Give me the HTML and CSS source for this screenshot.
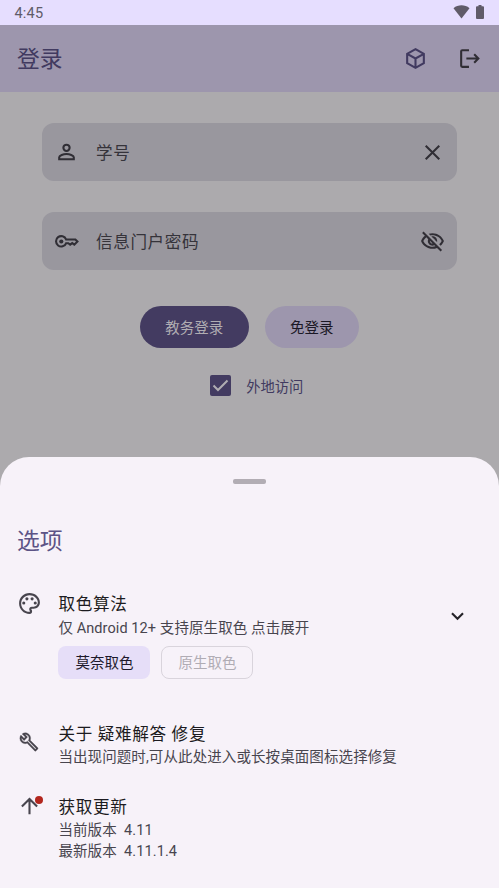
FILE: index.html
```html
<!DOCTYPE html>
<html lang="zh-CN">
<head>
<meta charset="utf-8">
<title>登录</title>
<link rel="stylesheet" href="styles.css">
</head>
<body>
<div class="screen">
  <div class="status-bar">
    <span class="clock">4:45</span>
    <svg class="wifi" viewBox="0 0 17 14"><path d="M.5 3.200C5-.6 12-.6 16.500 3.200L8.500 13.500z"/></svg>
    <svg class="battery" viewBox="0 0 8 14"><path d="M2.500 0h3v1.300H7q1 0 1 1V13q0 1-1 1H1q-1 0-1-1V2.300q0-1 1-1h1.500z"/></svg>
  </div>
  <header class="app-bar">
    <h1>登录</h1>
    <svg class="icon line cube" viewBox="0 0 24 24"><path d="M12 3l8 4.500v9L12 21l-8-4.500v-9zM4 7.500l8 4.500 8-4.500M12 12v9"/></svg>
    <svg class="icon line" viewBox="0 0 24 24"><path d="M11.500 4H5q-1 0-1 1v14q0 1 1 1h6.500M9 12h11M16.500 8l4 4-4 4"/></svg>
  </header>
  <main class="login">
    <div class="field">
      <svg class="icon line" viewBox="0 0 24 24"><circle cx="12" cy="7.500" r="3"/><path d="M5 18.500v-2c0-1.800 4-3 7-3s7 1.200 7 3v2z"/></svg>
      <span class="label">学号</span>
      <svg class="icon line" viewBox="0 0 24 24"><path d="M5.500 5.500l13 13M18.500 5.500l-13 13"/></svg>
    </div>
    <div class="field">
      <svg class="icon line" viewBox="0 0 24 24"><path d="M11.600 10H20.500l2 2-3 3-2-1.500-2 1.500-1.800-1.300h-2.100A5 5 0 1 1 11.600 10z"/><circle class="dot" cx="7" cy="12" r="2"/></svg>
      <span class="label">信息门户密码</span>
      <svg class="icon" viewBox="0 0 24 24"><path d="M12 6c3.790 0 7.170 2.130 8.820 5.500-.59 1.220-1.420 2.270-2.410 3.120l1.410 1.410c1.390-1.230 2.490-2.770 3.180-4.530C21.270 7.110 17 4 12 4c-1.270 0-2.490.2-3.640.57l1.650 1.650C10.660 6.090 11.320 6 12 6zm-1.070 1.140L13 9.210c.57.25 1.030.71 1.280 1.280l2.070 2.070c.08-.34.14-.7.14-1.070C16.500 9.010 14.480 7 12 7c-.37 0-.72.05-1.070.14zM2.010 3.870l2.680 2.680C3.060 7.830 1.770 9.530 1 11.500 2.730 15.890 7 19 12 19c1.520 0 2.980-.29 4.320-.82l3.420 3.420 1.410-1.410L3.420 2.450 2.010 3.870zm7.500 7.500l2.610 2.610c-.04.01-.08.02-.12.02-1.380 0-2.500-1.120-2.500-2.500 0-.05.01-.08.01-.13zm-3.400-3.400l1.750 1.750c-.23.55-.36 1.150-.36 1.780 0 2.480 2.020 4.500 4.500 4.500.63 0 1.230-.13 1.770-.36l.98.98c-.88.24-1.800.38-2.750.38-3.790 0-7.170-2.130-8.820-5.500.7-1.430 1.720-2.610 2.930-3.530z"/></svg>
    </div>
    <div class="buttons">
      <button class="btn primary">教务登录</button>
      <button class="btn tonal">免登录</button>
    </div>
    <div class="check">
      <svg class="box" viewBox="0 0 21 21"><rect width="21" height="21" rx="2"/><path d="M3.500 10.500l4.500 4.500 9.500-9.500"/></svg>
      <span>外地访问</span>
    </div>
  </main>
  <section class="sheet">
    <div class="handle"></div>
    <h2>选项</h2>
    <div class="row palette">
      <svg class="icon" viewBox="0 0 24 24"><path d="M12 22C6.490 22 2 17.510 2 12S6.490 2 12 2s10 4.040 10 9c0 3.310-2.690 6-6 6h-1.770c-.28 0-.5.22-.5.5 0 .12.05.23.13.33.41.47.64 1.060.64 1.670A2.500 2.500 0 0 1 12 22zm0-18c-4.410 0-8 3.590-8 8s3.590 8 8 8c.28 0 .5-.22.5-.5a.54.54 0 0 0-.14-.35c-.41-.46-.63-1.050-.63-1.650a2.500 2.500 0 0 1 2.500-2.500H16c2.210 0 4-1.790 4-4 0-3.860-3.590-7-8-7z"/><circle cx="6.500" cy="11.500" r="1.500"/><circle cx="9.500" cy="7.500" r="1.500"/><circle cx="14.500" cy="7.500" r="1.500"/><circle cx="17.500" cy="11.500" r="1.500"/></svg>
      <div class="text">
        <h3>取色算法</h3>
        <p>仅 Android 12+ 支持原生取色 点击展开</p>
        <div class="chips"><span class="chip selected">莫奈取色</span><span class="chip disabled">原生取色</span></div>
      </div>
      <svg class="icon line chevron" viewBox="0 0 24 24"><path d="M6.700 9.800l5.300 5.300 5.300-5.300"/></svg>
    </div>
    <div class="row repair">
      <svg class="icon wrench" viewBox="0 0 24 24"><path d="M22.610 18.990l-9.080-9.080c.93-2.340.45-5.100-1.440-7C9.790.61 6.210.4 3.660 2.260L7.500 6.110 6.080 7.520 2.250 3.690C.39 6.230.6 9.820 2.900 12.110c1.860 1.860 4.570 2.350 6.890 1.480l9.110 9.110c.39.39 1.020.39 1.410 0l2.300-2.300c.4-.38.4-1.010 0-1.410zm-3 1.600l-9.460-9.460c-.61.45-1.290.72-2 .82-1.360.2-2.790-.21-3.830-1.250C3.370 9.760 2.930 8.500 3 7.260l3.090 3.090 4.240-4.240-3.090-3.090c1.240-.07 2.490.37 3.440 1.310 1.080 1.080 1.490 2.570 1.240 3.960-.12.71-.42 1.370-.88 1.960l9.450 9.450-.88.89z"/></svg>
      <div class="text">
        <h3>关于 疑难解答 修复</h3>
        <p>当出现问题时,可从此处进入或长按桌面图标选择修复</p>
      </div>
    </div>
    <div class="row update">
      <div class="badged">
        <svg class="icon line" viewBox="0 0 24 24"><path d="M12 19.500V5M4.700 12L12 4.700 19.300 12"/></svg>
        <i class="badge"></i>
      </div>
      <div class="text">
        <h3>获取更新</h3>
        <p>当前版本&nbsp; 4.11</p>
        <p>最新版本&nbsp; 4.11.1.4</p>
      </div>
    </div>
  </section>
</div>
</body>
</html>
```
FILE: styles.css
```css
* { box-sizing: border-box; }
body, h1, h2, h3, p { margin: 0; font-weight: 400; }
body { font-family: Roboto, "Noto Sans CJK SC", sans-serif; background: #acaaad; }
.screen { height: 888px; display: flex; flex-direction: column; overflow: hidden; }
svg { display: block; flex: none; }

.status-bar { height: 25px; flex: none; background: #e6deff; display: flex; align-items: center; padding: 0 15px 0 14.500px; color: #605b69; }
.clock { flex: 1; font-size: 14.500px; line-height: 25px; padding-top: 2px; letter-spacing: .2px; }
.wifi, .battery { fill: #605b69; margin-top: -1px; }
.wifi { width: 17px; height: 14px; margin-right: 6px; }
.battery { width: 8px; height: 14px; }

.icon { width: 25px; height: 25px; fill: #302e35; }
.line { fill: none; stroke: #302e35; stroke-width: 2; }
.app-bar { height: 67px; flex: none; background: #9d96ad; display: flex; align-items: center; padding: 0 17px; gap: 29px; }
h1, h2 { font-size: 22.800px; line-height: 29px; }
h1 { flex: 1; color: #413a60; padding-top: 2px; }
.cube { stroke: #413a60; }

.login { flex: none; height: 365px; padding: 31px 42px 0 41.500px; }
.field { height: 58px; border-radius: 12px; background: #99979e; display: flex; align-items: center; padding: 0 12px 0 12.500px; margin-bottom: 31px; }
.field .label { flex: 1; margin-left: 17px; font-size: 16.600px; letter-spacing: .6px; color: #35333a; }
.dot { fill: #302e35; stroke: none; }
.buttons { display: flex; justify-content: center; gap: 16px; margin-top: 36px; }
.btn { border: 0; height: 42px; border-radius: 21px; padding: 3px 0 0; font: 400 14.500px/39px Roboto, "Noto Sans CJK SC", sans-serif; }
.primary { width: 109px; background: #433b61; color: #b0adb2; }
.tonal { width: 94px; background: #9d96ad; color: #1b1825; }
.check { display: flex; align-items: center; justify-content: center; gap: 15px; margin: 27px 0 0 15px; height: 21px; font-size: 14.300px; color: #413a60; }
.box { width: 21px; height: 21px; fill: #433b61; }
.box path { fill: none; stroke: #b0adb2; stroke-width: 2; }

.sheet { flex: 1; background: #f7f2f9; border-radius: 29px 29px 0 0; padding: 22px 17px 0; }
.handle { width: 33px; height: 5px; border-radius: 2px; background: #b2adb4; margin: 0 auto; }
h2 { color: #5c5386; margin-top: 43px; }
.row { display: flex; align-items: flex-start; }
.text { flex: 1; margin-left: 16.400px; }
.sheet .icon { fill: #48454e; }
.sheet .line { fill: none; stroke: #48454e; }
h3 { font-size: 16.600px; letter-spacing: .68px; line-height: 25px; color: #1c1b20; padding-top: 1px; }
p { font-size: 14.500px; line-height: 21px; letter-spacing: .09px; color: #48454e; }
.palette { margin-top: 35px; }
.palette p { padding-top: 1px; }
.chips { display: flex; gap: 11px; margin-top: 7px; }
.chip { height: 33px; width: 92px; border-radius: 8px; text-align: center; font-size: 14.500px; line-height: 33px; padding-top: 1px; }
.selected { background: #e6def8; color: #1d192b; }
.disabled { line-height: 31px; border: 1px solid #d9d4dc; color: #b0acb4; }
.sheet .chevron { stroke: #252329; margin: 12px 12px 0 0; }
.repair { margin-top: 42px; }
.sheet .wrench { width: 20px; height: 20px; margin: 11px 3px 0 2px; stroke: #48454e; stroke-width: .35; }
.update { margin-top: 26px; }
.badged { position: relative; }
.badge { position: absolute; top: 2px; right: -1px; width: 8px; height: 8px; border-radius: 50%; background: #b3261e; }
```
